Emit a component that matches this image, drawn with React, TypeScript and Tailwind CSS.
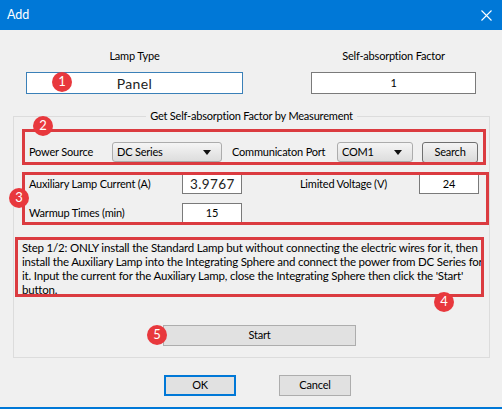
import React from 'react';

const font = { fontFamily: 'Lato, "Liberation Sans", sans-serif' };

function Badge({ n, className }: { n: number; className: string }) {
  return (
    <div
      className={`absolute flex h-[20px] w-[20px] items-center justify-center rounded-full bg-[#e8383d] text-[13px] tracking-normal text-white ${className}`}
    >
      {n}
    </div>
  );
}

function Combo({ value, className }: { value: string; className: string }) {
  return (
    <div
      className={`flex h-[20px] items-center justify-between rounded-[3px] border border-[#acacac] bg-gradient-to-b from-[#f5f5f5] to-[#dddddd] pl-[4px] pr-[10px] ${className}`}
    >
      <span>{value}</span>
      <svg width="8" height="5" viewBox="0 0 8 5">
        <path d="M0 0 L8 0 L4 5 Z" fill="#111" />
      </svg>
    </div>
  );
}

export default function App() {
  return (
    <div
      className="relative h-[409px] w-[502px] overflow-hidden whitespace-nowrap border-b-2 border-[#0078d7] bg-[#f0f0f0] text-[11px] tracking-[-0.2px] text-black"
      style={font}
    >
      {/* title bar */}
      <div className="flex h-[30px] items-center justify-between bg-[#0078d7] pl-[7px] pr-[10px] text-[12.5px] tracking-normal text-white">
        <span>Add</span>
        <svg width="11" height="11" viewBox="0 0 11 11">
          <path d="M0.5 0.5 L10.5 10.5 M10.5 0.5 L0.5 10.5" stroke="#fff" strokeWidth="1.1" />
        </svg>
      </div>

      {/* top fields */}
      <div className="flex">
        <div className="ml-[26px] flex w-[217px] flex-col items-center">
          <div className="mt-[18px] leading-[16px]">Lamp Type</div>
          <div className="mt-[8px] flex h-[22px] w-full items-center justify-center border border-[#3a80b8] bg-white text-[14px] tracking-[0.4px] text-[#222]">
            Panel
          </div>
        </div>
        <div className="ml-[68px] flex w-[165px] flex-col items-center">
          <div className="mt-[18px] leading-[16px]">Self-absorption Factor</div>
          <div className="mt-[8px] flex h-[22px] w-full items-center justify-center border border-[#7a7a7a] bg-white">
            1
          </div>
        </div>
      </div>

      {/* group box */}
      <div className="relative ml-[13px] mt-[22px] h-[242px] w-[477px] border border-[#dcdcdc]">
        <div className="absolute left-0 right-0 top-[-9px] flex justify-center">
          <span className="bg-[#f0f0f0] px-[4px] leading-[16px]">Get Self-absorption Factor by Measurement</span>
        </div>

        <div className="ml-[15px] mt-[25px] flex h-[20px] items-center">
          <span className="w-[83px]">Power Source</span>
          <Combo value="DC Series" className="w-[110px]" />
          <span className="ml-[10px] w-[105px]">Communicaton Port</span>
          <Combo value="COM1" className="w-[76px]" />
          <button className="ml-[9px] h-[21px] w-[56px] rounded-[3px] border border-[#707070] bg-gradient-to-b from-[#f4f4f4] to-[#dadada]">
            Search
          </button>
        </div>

        <div className="ml-[15px] mt-[12px] flex h-[20px] items-center">
          <span className="w-[153px]">Auxiliary Lamp Current (A)</span>
          <div className="flex h-[20px] w-[60px] items-center border border-[#7a7a7a] bg-white pl-[7px] text-[13.5px] tracking-[0.4px] text-[#222]">
            3.9767
          </div>
          <span className="w-[145px] text-right">Limited Voltage (V)</span>
          <div className="ml-[32px] flex h-[20px] w-[60px] items-center justify-center border border-[#7a7a7a] bg-white">
            24
          </div>
        </div>

        <div className="ml-[15px] mt-[9px] flex h-[20px] items-center">
          <span className="w-[153px]">Warmup Times (min)</span>
          <div className="flex h-[20px] w-[60px] items-center justify-center border border-[#7a7a7a] bg-white">
            15
          </div>
        </div>

        <p className="ml-[8px] mt-[18px] text-[11.5px] leading-[14px]">
          Step 1/2: ONLY install the Standard Lamp but without connecting the electric wires for it, then
          <br />
          install the Auxiliary Lamp into the Integrating Sphere and connect the power from DC Series for
          <br />
          it. Input the current for the Auxiliary Lamp, close the Integrating Sphere then click the 'Start'
          <br />
          button.
        </p>

        <button className="ml-[149px] mt-[28px] h-[21px] w-[193px] border border-[#adadad] bg-[#e1e1e1]">
          Start
        </button>
      </div>

      {/* dialog buttons */}
      <div className="ml-[164px] mt-[17px] flex gap-[43px]">
        <button className="h-[21px] w-[72px] border-2 border-[#0078d7] bg-[#e1e1e1]">OK</button>
        <button className="h-[21px] w-[72px] border border-[#adadad] bg-[#e1e1e1]">Cancel</button>
      </div>

      {/* annotation overlays */}
      <div className="absolute left-[22px] top-[129px] h-[36px] w-[464px] border-[3px] border-[#db3b40]" />
      <div className="absolute left-[22px] top-[172px] h-[53px] w-[467px] border-[3px] border-[#db3b40]" />
      <div className="absolute left-[15px] top-[237px] h-[60px] w-[469px] border-[3px] border-[#db3b40]" />
      <Badge n={1} className="left-[52px] top-[72px]" />
      <Badge n={2} className="left-[33px] top-[116px]" />
      <Badge n={3} className="left-[9px] top-[188px]" />
      <Badge n={4} className="left-[434px] top-[292px]" />
      <Badge n={5} className="left-[147px] top-[325px]" />
    </div>
  );
}
